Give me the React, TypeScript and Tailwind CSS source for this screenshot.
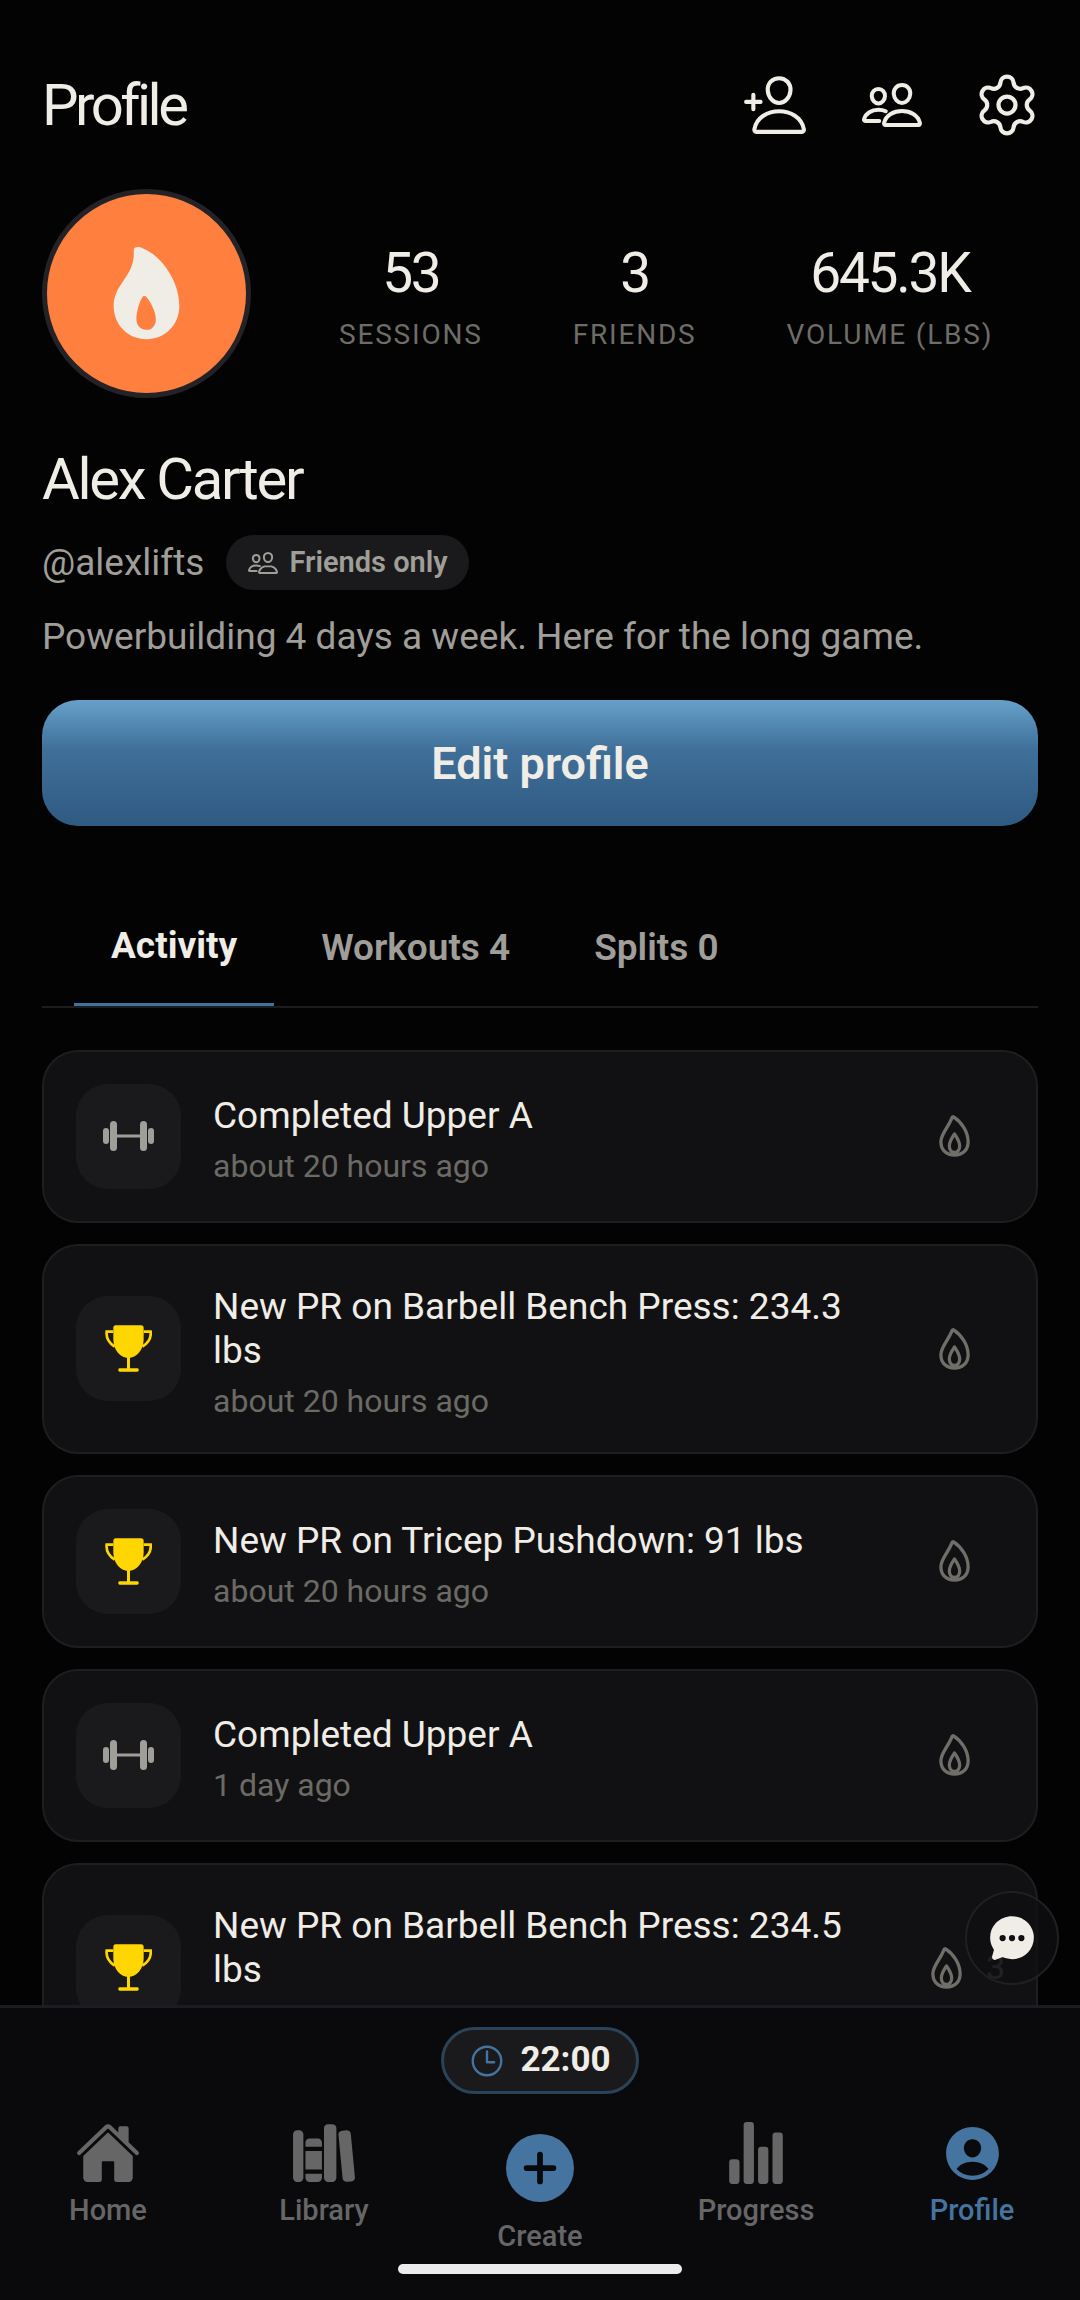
import { ReactNode } from "react"
import {
  IoChatbubbleEllipses,
  IoHome,
  IoLibrary,
  IoPeopleOutline,
  IoPersonAddOutline,
  IoPersonCircle,
  IoStatsChart,
  IoTimeOutline,
} from "react-icons/io5"
import { Plus, Settings } from "lucide-react"

const stats = [
  { value: "53", label: "SESSIONS" },
  { value: "3", label: "FRIENDS" },
  { value: "645.3K", label: "VOLUME (LBS)" },
]

// last card runs under the tab bar, so its time line never shows
const activity = [
  { kind: "workout", title: "Completed Upper A", time: "about 20 hours ago" },
  { kind: "pr", title: "New PR on Barbell Bench Press: 234.3 lbs", time: "about 20 hours ago" },
  { kind: "pr", title: "New PR on Tricep Pushdown: 91 lbs", time: "about 20 hours ago" },
  { kind: "workout", title: "Completed Upper A", time: "1 day ago" },
  { kind: "pr", title: "New PR on Barbell Bench Press: 234.5 lbs", time: "", count: 3 },
]

const FlameSolid = () => (
  <svg viewBox="250 203 200 277" className="h-[93px] w-[67px]">
    <path
      fill="#f0ede6"
      fillRule="evenodd"
      d="M312 212C312 202 325 200 340 207C400 232 448 310 448 378C448 436 404 478 350 478C296 478 252 436 252 378C252 330 290 300 305 262C313 240 312 225 312 212ZM343 348C337 348 320 385 320 420C320 438 333 450 350 450C367 450 378 436 378 418C378 390 352 348 343 348Z"
    />
  </svg>
)

const FlameOutline = () => (
  <svg viewBox="0 0 33 42" preserveAspectRatio="none" fill="none" stroke="#6f6e68" strokeWidth="3.5" className="h-[42px] w-[31px] shrink-0">
    <path d="M14 2.5C14 1.8 15 1.6 16 2.2C24 7 31 17 31 27C31 35 25 40 16.5 40C8 40 2 35 2 27C2 19 9 14 14 2.5Z" strokeLinejoin="round" />
    <path d="M16.5 19C13.5 23 11 27 11 31C11 35 13.5 37.5 16.5 37.5C19.5 37.5 22 35 22 31C22 27 19.5 23 16.5 19Z" strokeLinejoin="round" />
  </svg>
)

const Barbell = () => (
  <svg viewBox="0 0 51 30" fill="#a09e98" className="h-[30px] w-[51px]">
    <rect x="0" y="7" width="6" height="16" rx="3" />
    <rect x="7" y="0" width="7" height="30" rx="3.5" />
    <rect x="14" y="13.5" width="23" height="3" />
    <rect x="37" y="0" width="7" height="30" rx="3.5" />
    <rect x="45" y="7" width="6" height="16" rx="3" />
  </svg>
)

const Trophy = () => (
  <svg viewBox="225 797 141 141" className="h-[47px] w-[47px]">
    <path fill="#ffd600" d="M257 798H333Q341 798 341 806V840C341 872 320 896 295 896C270 896 250 872 250 840V806Q250 798 257 798Z" />
    <path fill="none" stroke="#ffd600" strokeWidth="8" d="M250 817H230C228 835 236 850 254 862M341 817H362C364 835 356 850 337 862" />
    <rect x="291" y="890" width="9" height="40" fill="#ffd600" />
    <rect x="265" y="927" width="61" height="10" rx="4" fill="#ffd600" />
  </svg>
)

const ActivityCard = ({ kind, title, time, count }: { kind: string; title: string; time: string; count?: number }) => (
  <div className="flex shrink-0 items-center rounded-[36px] border-2 border-[#1e1e20] bg-[#111113] p-[32px]">
    <div className="flex h-[105px] w-[105px] shrink-0 items-center justify-center rounded-[32px] bg-[#1a1a1c]">
      {kind === "pr" ? <Trophy /> : <Barbell />}
    </div>
    <div className="ml-[32px] min-w-0 flex-1 pr-[20px] pt-[7px]">
      <div className="text-[37px] leading-[44px] text-[#f0ede6]">{title}</div>
      <div className="mt-[10px] h-[37px] text-[32px] leading-[37px] text-[#6b6a64]">{time}</div>
    </div>
    {count ? (
      <div className="flex w-[100px] shrink-0 items-center gap-[24px] pl-[27px]">
        <FlameOutline />
        <span className="text-[34px] text-[#6b6a64]">{count}</span>
      </div>
    ) : (
      <div className="flex w-[100px] shrink-0 items-center justify-center">
        <FlameOutline />
      </div>
    )}
  </div>
)

const NavItem = ({ icon, label, active, low }: { icon: ReactNode; label: string; active?: boolean; low?: boolean }) => (
  <div className="flex flex-col items-center">
    <div className={low ? "flex h-[83px] items-end" : "flex h-[68px] items-center"}>{icon}</div>
    <span className={`${low ? "mt-[14px]" : "mt-[3px]"} text-[29px] font-medium leading-[40px] ${active ? "text-[#44749f]" : "text-[#666666]"}`}>
      {label}
    </span>
  </div>
)

export default function App() {
  return (
    <div className="relative flex h-[2300px] w-[1080px] flex-col overflow-hidden bg-[#030304] font-['Roboto',sans-serif]">
      <main className="min-h-0 flex-1 overflow-hidden px-[42px] pt-[74px]">
        <header className="flex h-[62px] items-center justify-between">
          <h1 className="text-[58px] font-[380] leading-[62px] tracking-[-3.5px] text-[#f0ede6]">Profile</h1>
          <div className="flex items-center">
            <IoPersonAddOutline size={66} color="#f0ede6" />
            <IoPeopleOutline size={64} color="#f0ede6" className="ml-[52px]" />
            <Settings size={68} color="#f0ede6" strokeWidth={1.5} className="-mr-[3px] ml-[49px]" />
          </div>
        </header>

        <section className="mt-[53px] flex items-center">
          <div className="flex h-[209px] w-[209px] shrink-0 items-center justify-center rounded-full border-[5px] border-[#232327] bg-[#ff7f3f]">
            <FlameSolid />
          </div>
          <div className="ml-[88px] flex gap-[90px]">
            {stats.map((s) => (
              <div key={s.label} className="flex flex-col items-center pt-[6px]">
                <span className="text-[55px] font-[380] leading-[62px] tracking-[-2.2px] text-[#f0ede6]">{s.value}</span>
                <span className="mt-[14px] text-[28px] leading-[34px] tracking-[1.8px] text-[#6e6c66]">{s.label}</span>
              </div>
            ))}
          </div>
        </section>

        <h2 className="mt-[51px] text-[58px] font-[380] leading-[60px] tracking-[-2.3px] text-[#f0ede6]">Alex Carter</h2>
        <div className="mt-[26px] flex items-center">
          <span className="text-[37px] text-[#a09e98]">@alexlifts</span>
          <div className="ml-[22px] flex h-[55px] items-center gap-[10px] rounded-full bg-[#1a1a1c] px-[21px]">
            <IoPeopleOutline size={32} color="#a09e98" />
            <span className="text-[29px] font-semibold text-[#a09e98]">Friends only</span>
          </div>
        </div>
        <p className="mt-[21px] text-[37px] leading-[50px] text-[#a09e98]">Powerbuilding 4 days a week. Here for the long game.</p>

        <button className="mt-[38px] flex h-[126px] w-full items-center justify-center rounded-[36px] bg-linear-to-b from-[#66a1c9] via-[#3f6f99] via-40% to-[#2f5a82] pt-[2px] text-[45px] font-semibold text-[#f0ede6]">
          Edit profile
        </button>

        <nav className="mt-[64px] flex gap-[10px] border-b-2 border-[#1c1c1e] pl-[32px]">
          <div className="flex h-[116px] items-center border-b-[3px] border-[#3f72a0] px-[37px] text-[37px] font-bold text-[#f0ede6]">Activity</div>
          <div className="flex h-[116px] items-center px-[37px] text-[37px] font-semibold text-[#a09e98]">Workouts 4</div>
          <div className="flex h-[116px] items-center px-[37px] text-[37px] font-semibold text-[#a09e98]">Splits 0</div>
        </nav>

        <div className="mt-[42px] flex flex-col gap-[21px]">
          {activity.map((a, i) => (
            <ActivityCard key={i} {...a} />
          ))}
        </div>
      </main>

      <footer className="h-[295px] shrink-0 border-t-[3px] border-[#1c1c22] bg-[#0a0a0d]">
        <div className="mt-[19px] flex justify-center">
          <div className="flex h-[67px] items-center gap-[14px] rounded-full border-[3px] border-[#2b4358] bg-[#1a1a1d] pl-[24px] pr-[25px]">
            <IoTimeOutline size={38} color="#44749f" />
            <span className="text-[35px] font-bold text-[#f0ede6]">22:00</span>
          </div>
        </div>
        <div className="mt-[25px] grid grid-cols-5">
          <NavItem icon={<IoHome size={66} color="#666666" />} label="Home" />
          <NavItem icon={<IoLibrary size={66} color="#666666" />} label="Library" />
          <NavItem
            low
            icon={
              <div className="flex h-[68px] w-[68px] items-center justify-center rounded-full bg-[#44749f]">
                <Plus size={46} color="#0a0a0d" strokeWidth={3} />
              </div>
            }
            label="Create"
          />
          <NavItem icon={<IoStatsChart size={66} color="#666666" />} label="Progress" />
          <NavItem active icon={<IoPersonCircle size={65} color="#44749f" />} label="Profile" />
        </div>
      </footer>

      <div className="absolute left-[965px] top-[1891px] flex h-[94px] w-[94px] items-center justify-center rounded-full border-2 border-[#202022] bg-[#0f0f11]/80">
        <IoChatbubbleEllipses size={50} color="#f0ede6" />
      </div>
      <div className="absolute left-[398px] top-[2264px] h-[10px] w-[284px] rounded-[5px] bg-[#ececec]" />
    </div>
  )
}
